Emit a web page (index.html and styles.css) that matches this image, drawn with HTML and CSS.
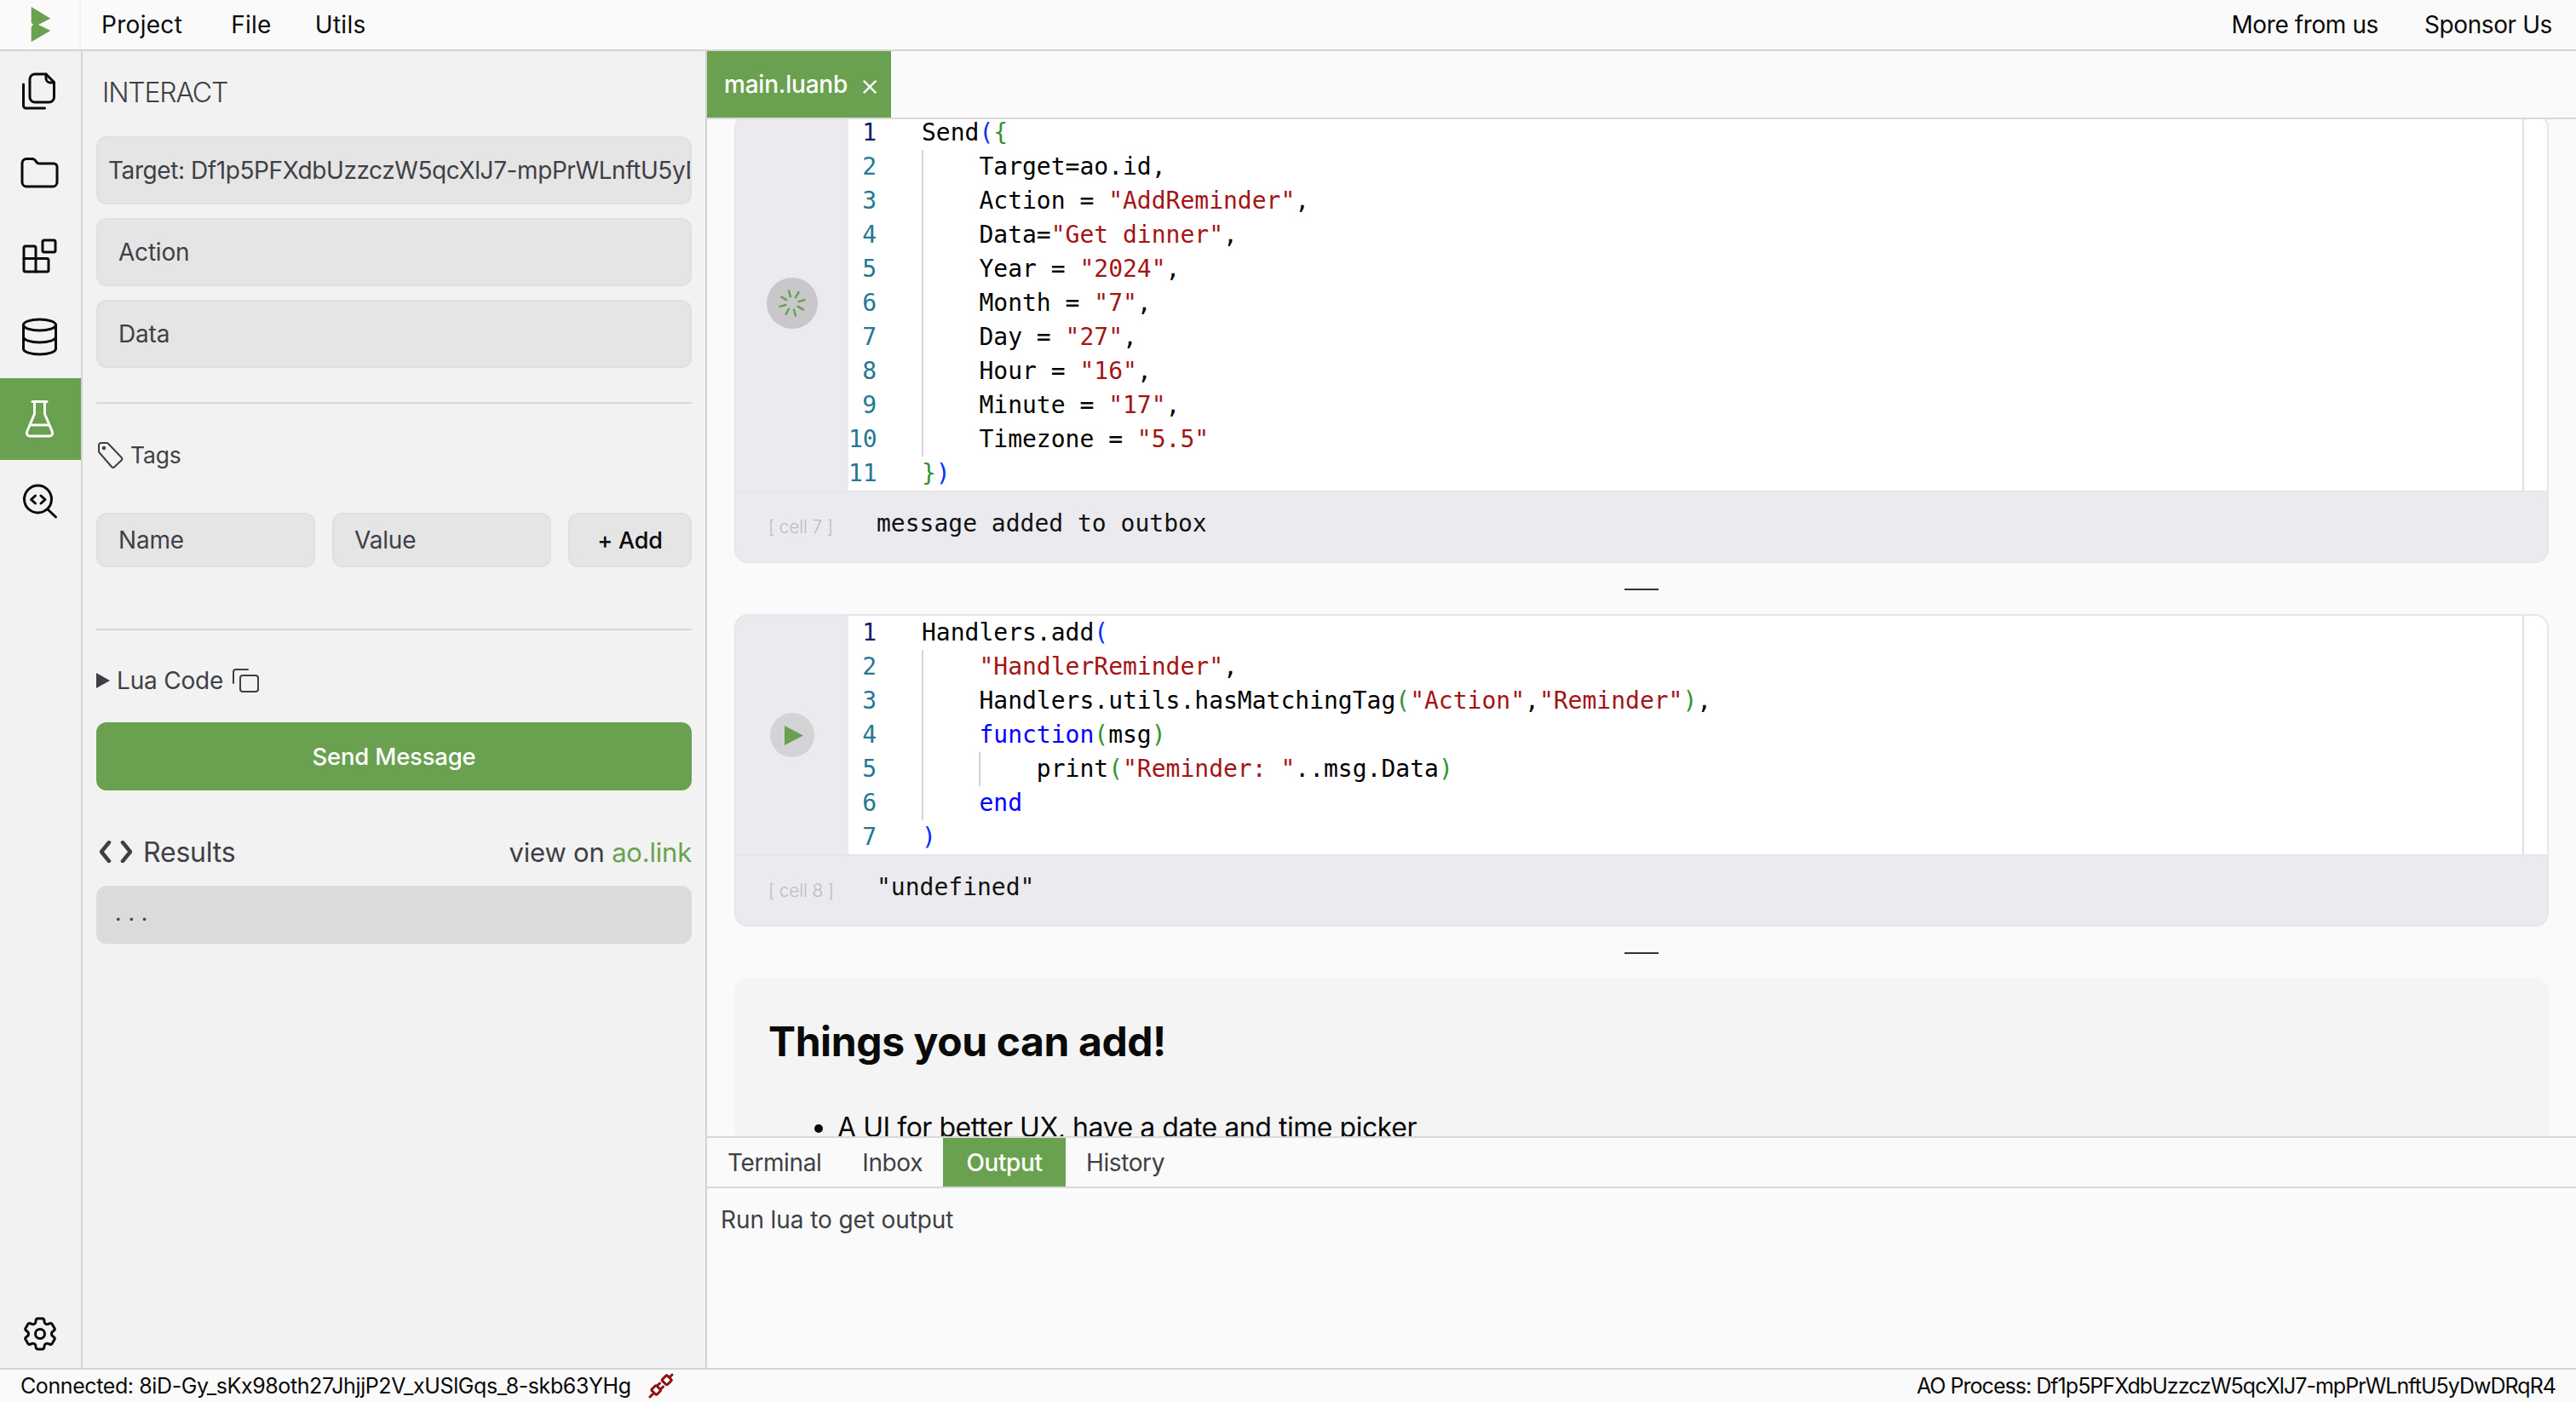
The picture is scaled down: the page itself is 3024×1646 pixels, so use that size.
FILE: index.html
```html
<!DOCTYPE html>
<html lang="en">
<head>
  <meta charset="UTF-8" />
  <title>BetterIDEa</title>
  <link rel="stylesheet" href="styles.css">
</head>
<body>
  <div class="app">

    <!-- Top menu -->
    <header class="topbar">
      <div class="logo">
        <svg width="24" height="44" viewBox="0 0 24 44"><path fill="#6aa150" d="M0.7 1L23.3 14.7 9 22 23.3 29 0.7 42.3V24.5L3 22 0.7 19.5z"/></svg>
      </div>
      <nav class="menu">
        <span>Project</span>
        <span>File</span>
        <span class="menu__utils">Utils</span>
      </nav>
      <nav class="menu menu--right">
        <span>More from us</span>
        <span>Sponsor Us</span>
      </nav>
    </header>

    <div class="workspace">

      <!-- Activity bar -->
      <aside class="activity">
        <div class="activity__item">
          <svg class="icon" viewBox="0 0 48 48"><path d="M18 3h13l9.500 9.500V30a6 6 0 0 1-6 6H18a6 6 0 0 1-6-6V9a6 6 0 0 1 6-6z"/><path d="M31 3v5a5 5 0 0 0 5 5h4.500"/><path d="M4.500 15v25a3 3 0 0 0 3 3h22"/></svg>
        </div>
        <div class="activity__item">
          <svg class="icon" viewBox="0 0 48 48"><path d="M8 6.500h7c2 0 3 1 4 2.500 1 2 2 3 4 3h17a4 4 0 0 1 4 4V34a5 5 0 0 1-5 5H8a5 5 0 0 1-5-5V11.500a5 5 0 0 1 5-5z"/></svg>
        </div>
        <div class="activity__item">
          <svg class="icon" viewBox="0 0 48 48"><rect x="27" y="6" width="15" height="14" rx="2"/><path d="M7 13h10a2 2 0 0 1 2 2v12.500h13a2 2 0 0 1 2 2V41a2 2 0 0 1-2 2H7a2 2 0 0 1-2-2V15a2 2 0 0 1 2-2z"/><path d="M5 27.500h14V43"/></svg>
        </div>
        <div class="activity__item">
          <svg class="icon" viewBox="0 0 48 48"><ellipse cx="23.500" cy="9.500" rx="19" ry="6.500"/><path d="M4.500 9.500v28c0 3.600 8.500 6.500 19 6.500s19-2.900 19-6.500v-28"/><path d="M4.500 23.500c0 3.600 8.500 6.500 19 6.500s19-2.900 19-6.500"/></svg>
        </div>
        <div class="activity__item activity__item--active">
          <svg class="icon" viewBox="0 0 48 48"><path d="M15 3.500h17"/><path d="M17.500 3.500V18L9 38c-1.500 3.500 0 6 3 6h23c3 0 4.500-2.500 3-6L29.500 18V3.500"/><path d="M13.500 31h20"/></svg>
        </div>
        <div class="activity__item">
          <svg class="icon" viewBox="0 0 48 48"><circle cx="21.500" cy="22" r="16"/><path d="M33 34l9.500 9"/><path d="M18.500 18l-5 4.500 5 4.500"/><path d="M25 18l5 4.500-5 4.500"/></svg>
        </div>
        <div class="activity__item activity__item--bottom">
          <svg class="icon icon--gear" viewBox="0 0 24 24"><path d="M9.594 3.940c.09-.542.56-.94 1.110-.94h2.593c.55 0 1.020.398 1.110.94l.213 1.281c.063.374.313.686.645.870.074.04.147.083.22.127.325.196.72.257 1.075.124l1.217-.456a1.125 1.125 0 0 1 1.370.49l1.296 2.247a1.125 1.125 0 0 1-.26 1.431l-1.003.827c-.293.241-.438.613-.43.992a7.723 7.723 0 0 1 0 .255c-.008.378.137.75.43.991l1.004.827c.424.35.534.955.26 1.430l-1.298 2.247a1.125 1.125 0 0 1-1.369.491l-1.217-.456c-.355-.133-.75-.072-1.076.124a6.470 6.470 0 0 1-.22.128c-.331.183-.581.495-.644.869l-.213 1.281c-.09.543-.56.94-1.110.94h-2.594c-.55 0-1.019-.398-1.110-.94l-.213-1.281c-.062-.374-.312-.686-.644-.87a6.520 6.520 0 0 1-.22-.127c-.325-.196-.72-.257-1.076-.124l-1.217.456a1.125 1.125 0 0 1-1.369-.49l-1.297-2.247a1.125 1.125 0 0 1 .26-1.431l1.004-.827c.292-.24.437-.613.43-.991a6.932 6.932 0 0 1 0-.255c.007-.38-.138-.751-.43-.992l-1.004-.827a1.125 1.125 0 0 1-.26-1.430l1.297-2.247a1.125 1.125 0 0 1 1.370-.491l1.216.456c.356.133.751.072 1.076-.124.072-.044.146-.086.22-.128.332-.183.582-.495.644-.869l.214-1.280Z"/><circle cx="12" cy="12" r="2.750"/></svg>
        </div>
      </aside>

      <!-- Interact panel -->
      <section class="panel">
        <h2 class="panel__title">INTERACT</h2>
        <div class="fields">
          <div class="field field--target">Target: Df1p5PFXdbUzzczW5qcXlJ7-mpPrWLnftU5yDwDRqR4</div>
          <div class="field">Action</div>
          <div class="field">Data</div>
        </div>
        <hr class="divider divider--first">
        <div class="tags-label">
          <svg width="32" height="32" viewBox="0 0 32 32"><path d="M3 4.500A2.500 2.500 0 0 1 5.500 2H12c.8 0 1.500.3 2 .8l15.500 16.200c1 1 1 2.500 0 3.500l-8 7.500c-1 1-2.500 1-3.500 0L3.800 13.500C3.300 13 3 12.300 3 11.500z"/><circle cx="9" cy="8" r="1.200"/></svg>
          <span>Tags</span>
        </div>
        <div class="tag-row">
          <div class="field field--small">Name</div>
          <div class="field field--small">Value</div>
          <div class="add-btn">+ Add</div>
        </div>
        <hr class="divider divider--second">
        <div class="lua-row">
          <span class="caret"></span>
          <span>Lua Code</span>
          <svg width="32" height="30" viewBox="0 0 32 30"><rect x="10" y="9" width="21" height="19" rx="3"/><path d="M2 18V5a3 3 0 0 1 3-3h14"/></svg>
        </div>
        <div class="send-btn">Send Message</div>
        <div class="results-head">
          <svg width="38" height="26" viewBox="0 0 38 26"><path d="M11 2L2 13l9 11"/><path d="M27 2l9 11-9 11"/></svg>
          <span class="results-head__label">Results</span>
          <span class="results-head__link">view on <a href="#">ao.link</a></span>
        </div>
        <div class="results-box">. . .</div>
      </section>

      <!-- Editor -->
      <main class="editor">
        <div class="tabs">
          <div class="tab">main.luanb <span class="tab__close">×</span></div>
        </div>

        <div class="cells">
          <div class="cells__inner">

            <div class="cell">
              <div class="cell__body">
                <div class="cell__run">
                  <div class="run-btn run-btn--busy">
                    <svg width="32" height="32" viewBox="0 0 32 32"><path transform="rotate(-15 16 16)" d="M16 1v7M16 24v7M1 16h7M24 16h7M5.500 5.500l5 5M21.500 21.500l5 5M5.500 26.500l5-5M21.500 10.500l5-5"/></svg>
                  </div>
                </div>
                <div class="code">
                  <div class="line"><span class="ln ln--active">1</span><span class="src">Send<span class="b1">(</span><span class="b2">{</span></span></div>
                  <div class="line"><span class="ln">2</span><span class="src"><span class="ig"></span>Target=ao.id,</span></div>
                  <div class="line"><span class="ln">3</span><span class="src"><span class="ig"></span>Action = <span class="str">"AddReminder"</span>,</span></div>
                  <div class="line"><span class="ln">4</span><span class="src"><span class="ig"></span>Data=<span class="str">"Get dinner"</span>,</span></div>
                  <div class="line"><span class="ln">5</span><span class="src"><span class="ig"></span>Year = <span class="str">"2024"</span>,</span></div>
                  <div class="line"><span class="ln">6</span><span class="src"><span class="ig"></span>Month = <span class="str">"7"</span>,</span></div>
                  <div class="line"><span class="ln">7</span><span class="src"><span class="ig"></span>Day = <span class="str">"27"</span>,</span></div>
                  <div class="line"><span class="ln">8</span><span class="src"><span class="ig"></span>Hour = <span class="str">"16"</span>,</span></div>
                  <div class="line"><span class="ln">9</span><span class="src"><span class="ig"></span>Minute = <span class="str">"17"</span>,</span></div>
                  <div class="line"><span class="ln">10</span><span class="src"><span class="ig"></span>Timezone = <span class="str">"5.5"</span></span></div>
                  <div class="line"><span class="ln">11</span><span class="src"><span class="b2">}</span><span class="b1">)</span></span></div>
                </div>
              </div>
              <div class="cell__output">
                <span class="cell__label">[ cell 7 ]</span>
                <span class="cell__text">message added to outbox</span>
              </div>
            </div>

            <div class="cell-gap"><span></span></div>

            <div class="cell">
              <div class="cell__body">
                <div class="cell__run">
                  <div class="run-btn">
                    <svg width="22" height="23" viewBox="0 0 22 23"><path class="play" d="M0 0l22 11.500L0 23z"/></svg>
                  </div>
                </div>
                <div class="code">
                  <div class="line"><span class="ln ln--active">1</span><span class="src">Handlers.add<span class="b1">(</span></span></div>
                  <div class="line"><span class="ln">2</span><span class="src"><span class="ig"></span><span class="str">"HandlerReminder"</span>,</span></div>
                  <div class="line"><span class="ln">3</span><span class="src"><span class="ig"></span>Handlers.utils.hasMatchingTag<span class="b2">(</span><span class="str">"Action"</span>,<span class="str">"Reminder"</span><span class="b2">)</span>,</span></div>
                  <div class="line"><span class="ln">4</span><span class="src"><span class="ig"></span><span class="kw">function</span><span class="b2">(</span>msg<span class="b2">)</span></span></div>
                  <div class="line"><span class="ln">5</span><span class="src"><span class="ig"></span><span class="ig"></span>print<span class="b2">(</span><span class="str">"Reminder: "</span>..msg.Data<span class="b2">)</span></span></div>
                  <div class="line"><span class="ln">6</span><span class="src"><span class="ig"></span><span class="kw">end</span></span></div>
                  <div class="line"><span class="ln">7</span><span class="src"><span class="b1">)</span></span></div>
                </div>
              </div>
              <div class="cell__output">
                <span class="cell__label">[ cell 8 ]</span>
                <span class="cell__text">"undefined"</span>
              </div>
            </div>

            <div class="cell-gap"><span></span></div>

            <div class="markdown">
              <h1>Things you can add!</h1>
              <ul>
                <li>A UI for better UX, have a date and time picker</li>
              </ul>
            </div>

          </div>
        </div>

        <!-- Bottom panel -->
        <div class="bottom">
          <div class="bottom__tabs">
            <span class="bottom__tab">Terminal</span>
            <span class="bottom__tab">Inbox</span>
            <span class="bottom__tab bottom__tab--active">Output</span>
            <span class="bottom__tab">History</span>
          </div>
          <div class="bottom__content">Run lua to get output</div>
        </div>
      </main>
    </div>

    <!-- Status bar -->
    <footer class="statusbar">
      <div class="statusbar__left">
        <span>Connected: 8iD-Gy_sKx98oth27JhjjP2V_xUSlGqs_8-skb63YHg</span>
        <svg width="28" height="28" viewBox="0 0 28 28"><rect x="16.500" y="3" width="8.500" height="8.500" rx="1.500" transform="rotate(45 20.700 7.200)"/><path d="M24 4l3-3"/><rect x="4" y="15" width="8.500" height="8" rx="1.500" transform="rotate(45 8.200 19)"/><path d="M4 24l-3 3M10 13.500l2.500-2.500M14 17.500l2.500-2.500"/></svg>
      </div>
      <span class="statusbar__process">AO Process: Df1p5PFXdbUzzczW5qcXlJ7-mpPrWLnftU5yDwDRqR4</span>
    </footer>
  </div>
</body>
</html>
```

FILE: styles.css
```css
* {
  margin: 0;
  padding: 0;
  box-sizing: border-box;
  font-family: 'Inter', sans-serif;
}

body {
  overflow: hidden;
  background: #fafafa;
  color: #0a0a0a;
  font-size: 28px;
  letter-spacing: -0.2px;
}

.app {
  width: 3024px;
  height: 1646px;
  display: flex;
  flex-direction: column;
}

/* Top bar */
.topbar {
  height: 60px;
  flex: none;
  display: flex;
  align-items: center;
  border-bottom: 2px solid #d4d4d4;
  background: #fafafa;
}

.logo {
  width: 95px;
  height: 58px;
  display: flex;
  align-items: center;
  padding-left: 36px;
  border-right: 2px solid #f3f3f3;
}

.menu {
  display: flex;
  gap: 57px;
  padding-left: 24px;
  letter-spacing: 0.3px;
}

.menu__utils {
  margin-left: -6px;
}

.menu--right {
  margin-left: auto;
  padding: 0 28px 0 0;
  gap: 54px;
  letter-spacing: -0.4px;
}

/* Activity bar */
.workspace {
  flex: 1;
  display: flex;
  min-height: 0;
}

.activity {
  width: 97px;
  flex: none;
  display: flex;
  flex-direction: column;
  background: #f2f2f2;
  border-right: 2px solid #d4d4d4;
}

.activity__item {
  height: 96px;
  display: flex;
  align-items: center;
  padding-left: 23px;
}

.activity__item--active {
  background: #6aa150;
  color: #fff;
}

.activity__item--bottom {
  margin-top: auto;
  padding-top: 16px;
}

.icon {
  width: 48px;
  height: 48px;
  fill: none;
  stroke: currentColor;
  stroke-width: 3;
  stroke-linecap: round;
  stroke-linejoin: round;
}

.icon--gear {
  stroke-width: 1.500;
}

/* Interact panel */
.panel {
  width: 733px;
  flex: none;
  padding: 25px 16px 0;
  background: #f2f2f2;
  border-right: 2px solid #d4d4d4;
  color: #3f3f46;
}

.panel svg {
  fill: none;
  stroke: #3f3f46;
  stroke-width: 2;
  stroke-linecap: round;
  stroke-linejoin: round;
  flex: none;
}

.panel__title {
  font-size: 32px;
  font-weight: 300;
  line-height: 48px;
  margin-bottom: 27px;
  padding-left: 7px;
  letter-spacing: -1.2px;
}

.fields {
  display: flex;
  flex-direction: column;
  gap: 16px;
}

.field {
  height: 80px;
  display: flex;
  align-items: center;
  padding: 0 24px;
  background: #e5e5e5;
  border: 2px solid #e0e0e0;
  border-radius: 12px;
  overflow: hidden;
  white-space: nowrap;
}

.field--target {
  padding: 0 2px 0 12px;
  letter-spacing: -0.42px;
}

.field--small {
  flex: 1;
  height: 64px;
}

.divider {
  border: none;
  border-top: 2px solid #d9d9d9;
}

.divider--first {
  margin-top: 40px;
}

.divider--second {
  margin-top: 72px;
}

.tags-label {
  height: 40px;
  margin-top: 40px;
  display: flex;
  align-items: center;
  gap: 8px;
  font-size: 26.500px;
}

.tag-row {
  display: flex;
  gap: 20px;
  margin-top: 48px;
}

.add-btn {
  width: 145px;
  height: 64px;
  flex: none;
  display: flex;
  align-items: center;
  justify-content: center;
  background: #e5e5e5;
  border: 2px solid #e0e0e0;
  border-radius: 12px;
  color: #0a0a0a;
  font-size: 27px;
  font-weight: 500;
}

.lua-row {
  height: 40px;
  margin-top: 39px;
  display: flex;
  align-items: center;
}

.caret {
  width: 0;
  height: 0;
  border-left: 16px solid #3f3f46;
  border-top: 9px solid transparent;
  border-bottom: 9px solid transparent;
  margin-right: 8px;
}

.lua-row svg {
  margin-left: 10px;
}

.send-btn {
  height: 80px;
  margin-top: 29px;
  display: flex;
  align-items: center;
  justify-content: center;
  background: #6aa150;
  border-radius: 12px;
  color: #fff;
  font-size: 27.500px;
  font-weight: 500;
}

.results-head {
  height: 40px;
  margin-top: 52px;
  display: flex;
  align-items: center;
  font-size: 31px;
  padding-left: 4px;
}

.results-head svg {
  stroke-width: 4.500;
}

.results-head__label {
  margin-left: 13px;
  font-size: 32px;
}

.results-head__link {
  margin-left: auto;
}

.results-head__link a {
  color: #6aa150;
  text-decoration: none;
}

.results-box {
  height: 68px;
  margin-top: 20px;
  padding: 16px 22px;
  background: #dbdbdb;
  border-radius: 12px;
  font-size: 26px;
  letter-spacing: 0.3px;
}

/* Editor */
.editor {
  flex: 1;
  min-width: 0;
  display: flex;
  flex-direction: column;
  background: #fafafb;
}

.tabs {
  height: 80px;
  flex: none;
  display: flex;
  border-bottom: 2px solid #d9d9d9;
  position: relative;
  z-index: 1;
  background: #fafafb;
}

.tab {
  width: 216px;
  height: 78px;
  display: flex;
  align-items: center;
  padding-left: 20px;
  background: #6aa150;
  color: #fff;
  font-weight: 500;
}

.tab__close {
  margin-left: 14px;
  font-size: 36px;
  font-weight: 300;
}

.cells {
  flex: 1;
  min-height: 0;
  overflow: hidden;
}

.cells__inner {
  margin-top: -6px;
  padding: 0 32px;
}

.cell {
  border: 2px solid #e6e6e9;
  border-radius: 16px;
  overflow: hidden;
  background: #ebebef;
}

.cell__body {
  display: flex;
}

.cell__run {
  width: 132px;
  flex: none;
  display: flex;
  align-items: center;
  justify-content: center;
}

.run-btn {
  width: 52px;
  height: 52px;
  border-radius: 50%;
  background: #d4d4d6;
  display: flex;
  align-items: center;
  justify-content: center;
  padding-left: 3px;
}

.run-btn--busy {
  width: 60px;
  height: 60px;
  background: #c8c8ca;
  padding-left: 0;
}

.run-btn--busy svg {
  fill: none;
  stroke: #6aa150;
  stroke-width: 2.500;
  stroke-linecap: round;
}

.play {
  fill: #6aa150;
}

.code {
  flex: 1;
  background: #fff;
  position: relative;
  padding-right: 27px;
}

.line {
  height: 40px;
  display: flex;
  border-right: 2px solid #e0e0e0;
  font-family: 'DejaVu Sans Mono', monospace;
  font-size: 28px;
  line-height: 40px;
  letter-spacing: 0;
  color: #000;
}

.line * {
  font-family: inherit;
}

.ln {
  width: 33px;
  margin-right: 53px;
  text-align: right;
  flex: none;
  color: #237893;
}

.ln--active {
  color: #0b216f;
}

.src {
  white-space: pre;
}

/* indent guide, one per indent level */
.ig {
  display: inline-block;
  width: 4ch;
  height: 40px;
  vertical-align: top;
  box-shadow: inset 2px 0 0 #d3d3d3;
}

.str { color: #a31515; }
.kw { color: #0000ff; }
.b1 { color: #0431fa; }
.b2 { color: #319331; }

.cell__output {
  height: 83px;
  display: flex;
  align-items: center;
  border-top: 2px solid #e6e6e9;
  padding-left: 38px;
}

.cell__label {
  width: 127px;
  flex: none;
  font-size: 21px;
  font-weight: 300;
  color: #bdbdc0;
}

.cell__text {
  font-family: 'DejaVu Sans Mono', monospace;
  font-size: 28px;
  letter-spacing: 0;
  color: #111;
  padding-bottom: 8px;
}

.cell-gap {
  height: 60px;
  display: flex;
  align-items: center;
  justify-content: center;
}

.cell-gap span {
  width: 40px;
  height: 2px;
  margin-top: 2px;
  background: #333;
}

.markdown {
  background: #f4f4f4;
  border-radius: 16px;
  padding: 40px;
  height: 400px;
}

.markdown h1 {
  font-size: 48px;
  font-weight: 700;
  line-height: 70px;
  letter-spacing: -0.4px;
}

.markdown ul {
  margin-top: 42px;
  padding-left: 81px;
  font-size: 32px;
  line-height: 48px;
  letter-spacing: -0.46px;
}

/* Bottom panel */
.bottom {
  height: 272px;
  flex: none;
  border-top: 2px solid #d9d9d9;
  background: #fafafa;
  position: relative;
}

.bottom__tabs {
  height: 59px;
  display: flex;
  border-bottom: 2px solid #d9d9d9;
  color: #3f3f46;
  letter-spacing: -0.4px;
}

.bottom__tab {
  display: flex;
  align-items: center;
  padding: 0 24px;
}

.bottom__tab--active {
  width: 144px;
  justify-content: center;
  padding: 0;
  background: #6aa150;
  color: #fff;
  font-weight: 500;
}

.bottom__content {
  padding: 20px 16px;
  color: #3f3f46;
  letter-spacing: -0.1px;
}

/* Status bar */
.statusbar {
  height: 40px;
  flex: none;
  display: flex;
  align-items: center;
  justify-content: space-between;
  padding: 0 24px;
  border-top: 2px solid #d4d4d4;
  background: #fafafa;
  font-size: 25px;
  letter-spacing: -0.4px;
}

.statusbar__left {
  display: flex;
  align-items: center;
  gap: 21px;
}

.statusbar__process {
  letter-spacing: -0.97px;
}

.statusbar svg {
  fill: none;
  stroke: #8e1111;
  stroke-width: 3;
  stroke-linecap: round;
  stroke-linejoin: round;
  overflow: visible;
}
```
